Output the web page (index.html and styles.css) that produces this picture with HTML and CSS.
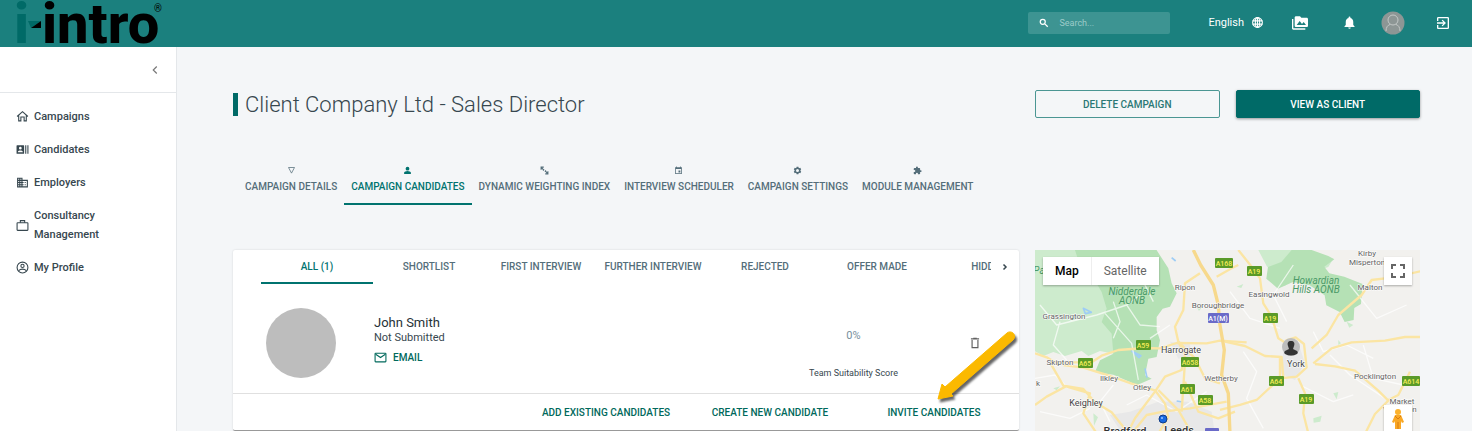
FILE: index.html
```html
<!DOCTYPE html>
<html lang="en">

<head>
	<meta charset="utf-8">
	<title>Client Company Ltd - Sales Director</title>

	<link rel="stylesheet" href="styles.css">
</head>

<body>
	<header class="topbar">
		<a class="logo" href="#" aria-label="i-intro">
			<svg width="150" height="47" viewBox="0 0 150 47">
				<text class="logo-text logo-first" x="-2" y="43">i</text>
				<path d="M12 21h13l-10 7z" fill="#006a67" />
				<path d="M25 21v7H15z" fill="#000" />
				<text class="logo-text" x="26" y="43">intro</text>
				<text class="logo-mark" x="138" y="12">®</text>
			</svg>
		</a>
		<div class="topbar-tools">
			<label class="search">
				<svg width="10" height="10" viewBox="0 0 24 24" fill="none" stroke="#fff" stroke-width="3"><circle cx="9" cy="9" r="6" /><path d="M14 14l7 7" /></svg>
				<input type="text" placeholder="Search..." aria-label="Search">
			</label>
			<button class="language" type="button">
				English
				<svg width="13" height="13" viewBox="0 0 24 24" fill="none" stroke="#fff" stroke-width="2"><circle cx="12" cy="12" r="9" /><ellipse cx="12" cy="12" rx="4" ry="9" /><path d="M3 9h18M3 15h18M12 3v18" /></svg>
			</button>
			<button class="tool" type="button" aria-label="Gallery">
				<svg width="16" height="16" viewBox="0 0 24 24"><path d="M2 6H0v14c0 1.100.9 2 2 2h18v-2H2zm20-2h-8l-2-2H6c-1.100 0-2 .9-2 2v12c0 1.100.9 2 2 2h16c1.100 0 2-.9 2-2V6c0-1.100-.9-2-2-2zM7 15l4.500-6 3.500 4.500 2.500-3L21 15z" /></svg>
			</button>
			<button class="tool bell" type="button" aria-label="Notifications">
				<svg width="15" height="15" viewBox="0 0 24 24"><path d="M12 22a2 2 0 0 0 2-2h-4a2 2 0 0 0 2 2zm6-6v-5c0-3.100-1.600-5.600-4.500-6.300V4a1.500 1.500 0 0 0-3 0v.7C7.600 5.400 6 7.900 6 11v5l-2 2v1h16v-1z" /></svg>
			</button>
			<button class="tool account" type="button" aria-label="Account">
				<svg width="24" height="24" viewBox="0 0 24 24" fill="none" stroke="#c3c8c7"><circle cx="12" cy="12" r="11.500" fill="#8d9695" stroke="none" /><circle cx="12" cy="9" r="5" /><path d="M5 20c0-4 2-6 4-6.500M19 20c0-4-2-6-4-6.500" /></svg>
			</button>
			<button class="tool logout" type="button" aria-label="Log out">
				<svg width="16" height="16" viewBox="0 0 24 24"><path d="M10 15.600 11.400 17l5-5-5-5L10 8.400l2.700 2.600H3v2h9.700zM19 3H5a2 2 0 0 0-2 2v4h2V5h14v14H5v-4H3v4c0 1.100.9 2 2 2h14a2 2 0 0 0 2-2V5a2 2 0 0 0-2-2z" /></svg>
			</button>
		</div>
	</header>

	<div class="layout">
		<aside class="sidebar">
			<div class="sidebar-head">
				<button class="collapse" type="button" aria-label="Collapse menu">
					<svg width="14" height="14" viewBox="0 0 24 24" fill="none" stroke="#777" stroke-width="2"><path d="M15 6l-6 6 6 6" /></svg>
				</button>
			</div>
			<nav class="menu">
				<a href="#">
					<svg viewBox="0 0 24 24" fill="none" stroke="#37474f" stroke-width="2"><path d="M2 12 12 3l10 9M5 10v10h4v-7h6v7h4V10" /></svg>
					<span>Campaigns</span>
				</a>
				<a href="#">
					<svg viewBox="0 0 24 24"><path d="M21 4h2v16h-2zm-4 0h2v16h-2zM14 4H2a1 1 0 0 0-1 1v14a1 1 0 0 0 1 1h12a1 1 0 0 0 1-1V5a1 1 0 0 0-1-1zM8 7a2.500 2.500 0 1 1 0 5 2.500 2.500 0 0 1 0-5zM12.500 17h-9v-.8c0-1.500 3-2.200 4.500-2.200s4.500.7 4.500 2.200z" /></svg>
					<span>Candidates</span>
				</a>
				<a href="#">
					<svg viewBox="0 0 24 24"><path d="M12 7V3H2v18h20V7zM6 19H4v-2h2zm0-4H4v-2h2zm0-4H4V9h2zm0-4H4V5h2zm4 12H8v-2h2zm0-4H8v-2h2zm0-4H8V9h2zm0-4H8V5h2zm10 12h-8v-2h2v-2h-2v-2h2v-2h-2V9h8zm-2-8h-2v2h2zm0 4h-2v2h2z" /></svg>
					<span>Employers</span>
				</a>
				<a href="#">
					<svg viewBox="0 0 24 24" fill="none" stroke="#37474f" stroke-width="2"><rect x="2" y="7" width="20" height="14" rx="1" /><path d="M8 7V3h8v4" /></svg>
					<span>Consultancy Management</span>
				</a>
				<a href="#">
					<svg viewBox="0 0 24 24" fill="none" stroke="#37474f" stroke-width="2"><circle cx="12" cy="12" r="10" /><circle cx="12" cy="9" r="3" /><path d="M5 18c3-4 11-4 14 0" /></svg>
					<span>My Profile</span>
				</a>
			</nav>
		</aside>

		<main class="content">
			<div class="title-row">
				<h1>Client Company Ltd - Sales Director</h1>
				<div class="actions">
					<button class="btn" type="button">DELETE CAMPAIGN</button>
					<button class="btn btn-filled" type="button">VIEW AS CLIENT</button>
				</div>
			</div>

			<nav class="tabs">
				<a href="#">
					<svg viewBox="0 0 24 24" fill="none" stroke="#546e7a" stroke-width="2"><path d="M4 4h16l-8 15z" /></svg>
					CAMPAIGN DETAILS
				</a>
				<a class="active" href="#">
					<svg viewBox="0 0 24 24"><circle cx="12" cy="7" r="5" /><path d="M3 21v-3c0-3 5-5 9-5s9 2 9 5v3z" /></svg>
					CAMPAIGN CANDIDATES
				</a>
				<a href="#">
					<svg viewBox="0 0 24 24" fill="none" stroke="#546e7a" stroke-width="3"><path d="M10 3H3v7M3 3l7 8M14 21h7v-7M21 21l-7-8M8 12l3-3M13 15l3-3" /></svg>
					DYNAMIC WEIGHTING INDEX
				</a>
				<a href="#">
					<svg viewBox="0 0 24 24"><path d="M17 12h-5v5h5zM16 1v2H8V1H6v2H3v18h18V3h-3V1zm3 18H5V8h14z" /></svg>
					INTERVIEW SCHEDULER
				</a>
				<a href="#">
					<svg viewBox="0 0 24 24" fill="none" stroke="#546e7a"><circle cx="12" cy="12" r="6" stroke-width="4" /><path d="M12 2v4M12 18v4M3.300 7l3.500 2M17.200 15l3.500 2M3.300 17l3.500-2M17.200 9l3.500-2" stroke-width="5" /></svg>
					CAMPAIGN SETTINGS
				</a>
				<a href="#">
					<svg viewBox="0 0 24 24"><path d="M20.500 11H19V7a2 2 0 0 0-2-2h-4V3.500a2.500 2.500 0 0 0-5 0V5H4a2 2 0 0 0-2 2v3.800h1.500a2.700 2.700 0 0 1 0 5.400H2V20c0 1.100.9 2 2 2h3.800v-1.500a2.700 2.700 0 0 1 5.400 0V22H17a2 2 0 0 0 2-2v-4h1.500a2.500 2.500 0 0 0 0-5z" /></svg>
					MODULE MANAGEMENT
				</a>
			</nav>

			<div class="columns">
				<section class="card">
					<div class="stages">
						<div class="stage-list">
							<a class="active" href="#">ALL (1)</a>
							<a href="#">SHORTLIST</a>
							<a href="#">FIRST INTERVIEW</a>
							<a href="#">FURTHER INTERVIEW</a>
							<a href="#">REJECTED</a>
							<a href="#">OFFER MADE</a>
							<a href="#">HIDDEN</a>
						</div>
						<button class="next" type="button" aria-label="More stages">
							<svg width="12" height="12" viewBox="0 0 24 24" fill="none" stroke="#37474f" stroke-width="3"><path d="M9 7l5 5-5 5" /></svg>
						</button>
					</div>

					<div class="candidate">
						<div class="photo"></div>
						<div class="person">
							<div class="name">John Smith</div>
							<div class="status">Not Submitted</div>
							<a class="email" href="#">
								<svg width="13" height="13" viewBox="0 0 24 24" fill="none" stroke="#00695c" stroke-width="2"><rect x="2" y="4" width="20" height="16" rx="1" /><path d="M3 6l9 6 9-6" /></svg>
								EMAIL
							</a>
						</div>
						<div class="score">
							<div class="percent">0%</div>
							<div class="score-label">Team Suitability Score</div>
						</div>
						<button class="remove" type="button" aria-label="Remove candidate">
							<svg width="14" height="14" viewBox="0 0 24 24" fill="none" stroke="#616161" stroke-width="2"><path d="M7 7v13h10V7M5 5h14M9 4h6" /></svg>
						</button>
					</div>

					<div class="card-actions">
						<button type="button">ADD EXISTING CANDIDATES</button>
						<button type="button">CREATE NEW CANDIDATE</button>
						<button type="button">INVITE CANDIDATES</button>
					</div>

					<svg class="pointer" width="90" height="80" viewBox="0 0 90 80">
						<path d="M78 4 16 58l-3-3-4 15 15-3-2-2 62-54a4 4 0 0 0-6-7z" fill="#fbb900" stroke="#fbb900" stroke-linejoin="round" />
					</svg>
				</section>

				<section class="map">
					<svg class="map-canvas" viewBox="0 0 385 181">
						<rect width="385" height="181" fill="#f2f1ee" />
						<g transform="translate(-5 -5) scale(.3333)" fill="none" stroke-linejoin="round">
							<!-- parks -->
							<path d="M0 0h270v330l-60-12-35 15-20-15-50 15-35-12-30 12L0 310z" fill="#cdebcd" />
							<path d="M130 0h240l45 70 10 45 15 30-20 40-22 6-18 25v40l10 30-10 50-25 5-10 50 20 10-45 20-20-10-50-22-55-8 15-35 40-20-5-60-30-35 15-40-15-50-30-50-35-30z" fill="#b5e1b5" />
							<path d="M685 15h115l20 10 90 16-15 25-60 20-30 25-20-20-20 32-55-60-25-48z" fill="#cdebcd" />
							<path d="M785 15h60l50 18 18 10-30 22 15 20 45 10 55 22-5 60-20 12-2 36-27 6-15-30-40-20-5-30-45-30-50-10-45 20-35-30 5-35 40-15z" fill="#b5e1b5" />
							<path d="M190 505l14 12-12 25zM500 185l15 3-8 10zM850 520l25-8-4 18-20 3zM910 445l15-4-5 22zM950 230l20 10-12 8zM70 430l20-6-10 12zM620 125l20-8-6 12zM925 285l8 10-8 5z" fill="#cdebcd" />
							<!-- towns -->
							<path d="M385 470l90 0 70 30 10 70H280l-40-60 60-10zM420 290l60 8 5 35-40 8zM760 320l50-10 15 45-30 50-45-20z" fill="#e8e8e8" />
							<!-- water -->
							<path d="M160 190l24 12-18 4zM245 150l8-10M305 318l28 14-6 6zM345 370l6 28M440 468l18 3M425 38l12 10" stroke="#9ecdf5" stroke-width="5" />
							<!-- minor roads -->
							<g stroke="#fff" stroke-width="4" opacity=".7">
								<path d="M30 180l50 60 120-30 90-30 40-30M90 230l-20 70 40 45M250 170l20 60-20 50M225 205l80 90 20 110M290 180l40 60 60 5M15 400l60-10 40 40M250 420l-40 50 30 60M420 240l-60 40M340 110l30 60M600 140l60 80 90 30M640 320l40 60-30 80 50 90M790 60l-60 90 40 80M850 260l30 60 70-20 80 40M900 330l60 60 120 80M810 420l100 50 60-20M960 120l80 100 90-40M1000 300l30 100 90 20M30 500l90 20 60-30M290 480l60-30 90 50 90-60" />
							</g>
							<!-- A roads -->
							<g stroke="#fbe5a3" stroke-width="7">
								<path d="M15 325l35 12 25 15h110l30-20 50-17 80-6 45 1 50-16 90 1 40-8 80 5" />
								<path d="M60 352l40 70 60 10 35 40 50 30 40 50M15 480l35-25 60-32M110 425l70 20-20 60 40 60" />
								<path d="M100 360l60 8 80 25 65 23 70 20 30 40 10 40-30 50" />
								<path d="M510 85l-45 30-5 80-25 50 10 45 20 40-10 45-50 20-30 45-60 80-20 40" />
								<path d="M445 290l50 50 30 60 45 15M465 350l-10 150M465 410l40 90 60 20 50-20M385 435l60 60 40 70M310 560l40-50 50-10 80-10 110-20" />
								<path d="M585 290l60 13 60 30 50 3 5 62M750 335v60M570 495l60-15 50-15 70-65 50-5 30-28-8-70-25-20-30 10" />
								<path d="M625 15l40 50 25 35 10 75 25 40 20 65 40 25M805 400l20 45-5 60 15 60M855 357l60 7 60 13 70 60 30 30-40 40-30 60M850 355l55-45 60-18 100-5 60-11h60" />
								<path d="M845 310l45-40 35-60 70-60 30-45 65-8 90-20M1075 465l30-15 35-70" />
								<path d="M560 95l45-25 20-10" />
							</g>
							<!-- motorways -->
							<path d="M490 15l22 45 38 60 15 60 4 55 14 80-8 75 20 55 5 120" stroke="#f7d98c" stroke-width="10" />
						</g>

						<g class="place">
							<text x="4" y="24" class="park">Pa</text>
							<text x="97" y="45" class="park">Nidderdale</text>
							<text x="97" y="54" class="park">AONB</text>
							<text x="281" y="34" class="park">Howardian</text>
							<text x="281" y="43" class="park">Hills AONB</text>
							<text x="150" y="40">Ripon</text>
							<text x="183" y="58">Boroughbridge</text>
							<text x="234" y="47">Easingwold</text>
							<text x="29" y="69">Grassington</text>
							<text x="335" y="40">Malton</text>
							<text x="332" y="6">Kirby</text>
							<text x="332" y="15">Misperton</text>
							<text x="146" y="103" class="town">Harrogate</text>
							<text x="25" y="115">Skipton</text>
							<text x="74" y="131">Ilkley</text>
							<text x="107" y="140">Otley</text>
							<text x="186" y="131">Wetherby</text>
							<text x="51" y="156" class="town">Keighley</text>
							<text x="3" y="136">k</text>
							<text x="261" y="117" class="town">York</text>
							<text x="340" y="129">Pocklington</text>
							<text x="367" y="154">Market</text>
							<text x="365" y="162">Weighton</text>
							<text x="90" y="185" class="city">Bradford</text>
							<text x="144" y="184" class="city">Leeds</text>
						</g>

						<g class="road">
							<g fill="#5a9a28">
								<rect x="180" y="8" width="18" height="10" rx="1" />
								<rect x="212" y="16" width="15" height="10" rx="1" />
								<rect x="228" y="63" width="15" height="10" rx="1" />
								<rect x="101" y="90" width="15" height="10" rx="1" />
								<rect x="43" y="108" width="15" height="10" rx="1" />
								<rect x="146" y="107" width="18" height="10" rx="1" />
								<rect x="145" y="134" width="15" height="10" rx="1" />
								<rect x="163" y="145" width="15" height="10" rx="1" />
								<rect x="234" y="126" width="15" height="10" rx="1" />
								<rect x="264" y="144" width="15" height="10" rx="1" />
								<rect x="367" y="126" width="18" height="10" rx="1" />
							</g>
							<rect x="173" y="63" width="21" height="10" rx="1" fill="#6a6ac8" />
							<rect x="170" y="178" width="14" height="10" rx="1" fill="#6a6ac8" />
							<text x="189" y="16">A168</text>
							<text x="219" y="24">A19</text>
							<text x="235" y="71">A19</text>
							<text x="108" y="98">A59</text>
							<text x="50" y="116">A65</text>
							<text x="155" y="115">A658</text>
							<text x="152" y="142">A61</text>
							<text x="170" y="153">A58</text>
							<text x="241" y="134">A64</text>
							<text x="271" y="152">A19</text>
							<text x="376" y="134">A614</text>
							<text x="183" y="71" class="motorway">A1(M)</text>
						</g>

						<circle cx="128" cy="169" r="4" fill="#1769e0" stroke="#123d86" />
						<circle cx="127" cy="168" r="1" fill="#9cc8ff" />
						<circle cx="256" cy="97" r="9" fill="#bdbdbd" />
						<path d="M256 91c-3 0-4 2-3 5l1 3-4 2c-1 1-1 2 0 3 4 2 8 2 12 0 1-1 1-2 0-3l-4-2 1-3c1-3 0-5-3-5z" fill="#333" />
					</svg>
					<div class="map-type">
						<button class="selected" type="button">Map</button>
						<button type="button">Satellite</button>
					</div>
					<button class="map-btn fullscreen" type="button" aria-label="Toggle fullscreen">
						<svg width="14" height="14" viewBox="0 0 14 14" fill="none" stroke="#666" stroke-width="2"><path d="M1 5V1h4M9 1h4v4M13 9v4H9M5 13H1V9" /></svg>
					</button>
					<button class="map-btn pegman" type="button" aria-label="Street View">
						<svg width="14" height="22" viewBox="0 0 14 22"><path d="M4 7h6l3 7-2 1-1-2v8H4v-8l-1 2-2-1z" fill="#f9a825" /><circle cx="7" cy="4" r="3" fill="#fbb22d" /><path d="M4 8l3 3 3-3M7 14v7" fill="none" stroke="#d97a12" /></svg>
					</button>
				</section>
			</div>
		</main>
	</div>
</body>

</html>
```
FILE: styles.css
```css
* {
	box-sizing: border-box;
}

body {
	margin: 0;
	min-height: 100vh;
	overflow: hidden;
	background-color: #f4f6f8;
	color: #37474f;
	font-family: Roboto, "Liberation Sans", sans-serif;
	font-size: 11px;
}

a {
	color: inherit;
	text-decoration: none;
}

button {
	padding: 0;
	border: 0;
	background: none;
	color: inherit;
	font: inherit;
	cursor: pointer;
}

svg {
	display: block;
	flex: none;
}

/* top bar */
.topbar {
	display: flex;
	justify-content: space-between;
	height: 47px;
	padding: 0 17px 0 16px;
	background-color: #1b807e;
	color: #fff;
}

.logo-text {
	font-size: 56px;
	font-weight: 800;
}

.logo-first {
	fill: #006a67;
}

.logo-mark {
	font-size: 10px;
}

.topbar-tools {
	display: flex;
	align-items: center;
	padding-bottom: 2px;
}

.topbar-tools svg {
	fill: #fff;
}

.topbar-tools svg[fill="none"] {
	fill: none;
}

.search {
	display: flex;
	align-items: center;
	gap: 10px;
	width: 142px;
	height: 22px;
	margin-right: 38px;
	padding: 0 11px;
	border-radius: 2px;
	background-color: #3d9492;
}

.search input {
	width: 100%;
	padding: 0;
	border: 0;
	outline: 0;
	background: none;
	color: #fff;
	font: inherit;
	font-size: 9px;
}

.search input::placeholder {
	color: #9ccbc9;
}

.language {
	display: flex;
	align-items: center;
	gap: 7px;
	margin-right: 24px;
}

.tool {
	display: flex;
	align-items: center;
	justify-content: center;
	width: 24px;
	height: 24px;
}

.bell {
	margin-left: 25px;
}

.account {
	margin-left: 20px;
}

.logout {
	margin-left: 26px;
}

/* sidebar */
.layout {
	display: flex;
	min-height: calc(100vh - 47px);
}

.sidebar {
	flex: none;
	width: 177px;
	border-right: 1px solid #e4e7ea;
	background-color: #fff;
}

.sidebar-head {
	display: flex;
	align-items: center;
	justify-content: flex-end;
	height: 46px;
	padding-right: 14px;
	border-bottom: 1px solid #e4e7ea;
}

.menu {
	padding: 7px 16px;
	font-weight: 500;
	line-height: 19px;
}

.menu a {
	display: flex;
	align-items: center;
	gap: 5px;
	padding: 7px 0;
}

.menu svg {
	width: 13px;
	height: 13px;
	fill: #37474f;
}

.menu svg[fill="none"] {
	fill: none;
}

/* page */
.content {
	flex: 1;
	min-width: 0;
	padding: 43px 52px 0 56px;
}

.title-row,
.columns {
	display: grid;
	grid-template-columns: repeat(12, minmax(0, 1fr));
	column-gap: 16px;
}

h1 {
	grid-column: span 8;
	align-self: center;
	margin: 0;
	padding-left: 7px;
	border-left: 5px solid #006a67;
	font-size: 22px;
	font-weight: 300;
	line-height: 23px;
}

.actions {
	display: flex;
	grid-column: span 4;
	gap: 16px;
}

.btn {
	flex: 1;
	height: 28px;
	border: 1px solid #4b9693;
	border-radius: 2px;
	color: #2b7875;
	font-size: 10px;
	font-weight: 500;
}

.btn-filled {
	border-color: #006a67;
	background-color: #006a67;
	box-shadow: 0 1px 3px rgba(0, 0, 0, .4);
	color: #fff;
}

.tabs {
	display: flex;
	margin: 46px 0 45px 5px;
	color: #546e7a;
	font-size: 10px;
	font-weight: 500;
}

.tabs a {
	display: flex;
	flex-direction: column;
	align-items: center;
	gap: 6px;
	height: 41px;
	padding: 2px 7px 0;
	line-height: 12px;
	border-bottom: 2px solid transparent;
}

.tabs svg {
	width: 9px;
	height: 9px;
	fill: currentColor;
}

.tabs svg[fill="none"] {
	fill: none;
}

.tabs .active,
.stage-list .active {
	border-color: #00736f;
	color: #00736f;
}

/* candidates card */
.card {
	position: relative;
	grid-column: span 8;
	align-self: start;
	border-bottom: 1px solid #999;
	border-radius: 2px;
	background-color: #fff;
	box-shadow: 0 0 2px rgba(0, 0, 0, .15);
}

.stages {
	display: flex;
	padding: 0 8px 0 28px;
	color: #546e7a;
	font-size: 10px;
	font-weight: 500;
}

.stage-list {
	display: flex;
	flex: 1;
	overflow: hidden;
}

.stage-list a {
	flex: none;
	width: 112px;
	height: 34px;
	border-bottom: 2px solid transparent;
	line-height: 33px;
	text-align: center;
}

.next {
	padding: 0 0 0 8px;
}

.candidate {
	display: flex;
	align-items: center;
	height: 109px;
	padding: 8px 37px 0 33px;
}

.photo {
	width: 70px;
	height: 70px;
	margin-right: 38px;
	border-radius: 50%;
	background-color: #bdbdbd;
}

.person {
	flex: 1;
	padding-bottom: 6px;
}

.name {
	font-size: 13px;
	line-height: 16px;
	color: #263238;
}

.status {
	line-height: 14px;
}

.email {
	display: flex;
	align-items: center;
	gap: 6px;
	margin-top: 6px;
	color: #00695c;
	font-size: 10px;
	font-weight: 500;
}

.score {
	padding-top: 22px;
	text-align: center;
}

.percent {
	color: #78909c;
	line-height: 14px;
}

.score-label {
	margin-top: 24px;
	font-size: 9px;
	line-height: 12px;
}

.remove {
	margin-left: 70px;
}

.card-actions {
	display: flex;
	justify-content: flex-end;
	padding-right: 3px;
	border-top: 1px solid #e0e0e0;
	color: #00695c;
	font-size: 10px;
	font-weight: 500;
}

.card-actions button {
	width: 164px;
	height: 36px;
}

.pointer {
	position: absolute;
	top: 79px;
	right: 0;
	filter: drop-shadow(2px 3px 1px rgba(0, 0, 0, .6));
}

/* map */
.map {
	position: relative;
	grid-column: span 4;
}

.map-canvas {
	width: 100%;
	height: auto;
}

.place {
	fill: #616161;
	font-size: 8px;
	text-anchor: middle;
	paint-order: stroke;
	stroke: #fff;
	stroke-width: 1px;
}

.place .park {
	fill: #4b9a68;
	stroke: none;
	font-size: 10px;
	font-style: italic;
}

.place .town {
	fill: #444;
	font-size: 9px;
}

.place .city {
	fill: #333;
	font-size: 11px;
	font-weight: 500;
}

.road text {
	fill: #f5ed5a;
	font-size: 7px;
	font-weight: 500;
	text-anchor: middle;
}

.road .motorway {
	fill: #fff;
}

.map-type {
	display: flex;
	position: absolute;
	top: 7px;
	left: 8px;
	background-color: #fff;
	box-shadow: 0 1px 2px rgba(0, 0, 0, .3);
	color: #666;
	font-size: 12px;
}

.map-type button {
	height: 28px;
	padding: 0 12px;
}

.map-type .selected {
	border-right: 1px solid #eee;
	color: #000;
	font-weight: 500;
}

.map-btn {
	display: flex;
	position: absolute;
	right: 8px;
	align-items: center;
	justify-content: center;
	width: 28px;
	height: 28px;
	background-color: #fff;
	box-shadow: 0 1px 2px rgba(0, 0, 0, .3);
}

.fullscreen {
	top: 7px;
}

.pegman {
	top: 155px;
}
```
